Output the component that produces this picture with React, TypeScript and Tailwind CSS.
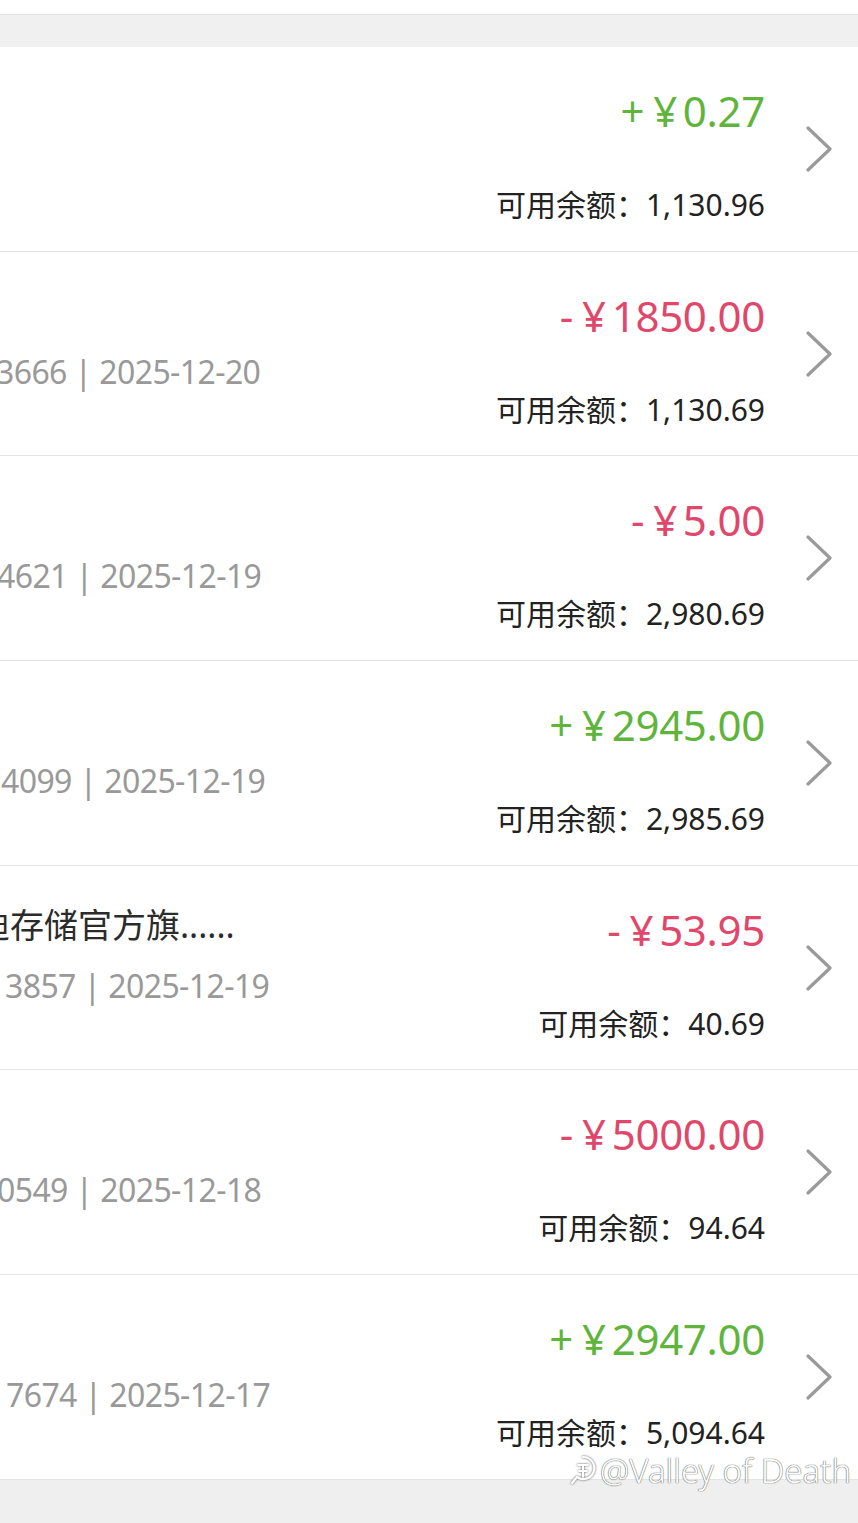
import React from 'react';

type Row = {
  title?: string;
  titleOffset?: string;
  sub?: string;
  subOffset?: string;
  sign: '+' | '-';
  amount: string;
  balance: string;
};

const rows: Row[] = [
  { sign: '+', amount: '0.27', balance: '1,130.96' },
  { sub: '3666 | 2025-12-20', subOffset: 'ml-[-4px]', sign: '-', amount: '1850.00', balance: '1,130.69' },
  { sub: '4621 | 2025-12-19', subOffset: 'ml-[-3px]', sign: '-', amount: '5.00', balance: '2,980.69' },
  { sub: '4099 | 2025-12-19', subOffset: 'ml-[1px]', sign: '+', amount: '2945.00', balance: '2,985.69' },
  {
    title: '闪迪存储官方旗......',
    titleOffset: 'ml-[-58px]',
    sub: '3857 | 2025-12-19',
    subOffset: 'ml-[5px]',
    sign: '-',
    amount: '53.95',
    balance: '40.69',
  },
  { sub: '0549 | 2025-12-18', subOffset: 'ml-[-3px]', sign: '-', amount: '5000.00', balance: '94.64' },
  { sub: '7674 | 2025-12-17', subOffset: 'ml-[6px]', sign: '+', amount: '2947.00', balance: '5,094.64' },
];

const Chevron: React.FC = () => (
  <svg className="self-center ml-[40px] mr-[25px] shrink-0" width="28" height="46" viewBox="0 0 28 46">
    <polyline points="3,2 25,23 3,44" fill="none" stroke="#9a9a9a" strokeWidth="3.2" strokeLinecap="round" strokeLinejoin="round" />
  </svg>
);

const TxRow: React.FC<{ row: Row }> = ({ row }) => {
  const color = row.sign === '+' ? 'text-[#5fb53c]' : 'text-[#e0476a]';
  return (
    <div className="h-[204.7px] flex bg-white border-b border-[#e4e4e4]">
      <div className="flex-1 min-w-0 overflow-hidden pt-[37px] whitespace-nowrap">
        <div className={`h-[44px] text-[34px] leading-[44px] text-[#2b2b2b] ${row.titleOffset ?? ''}`}>
          {row.title ?? ''}
        </div>
        <div className={`mt-[17px] h-[44px] text-[32px] leading-[44px] tracking-[-0.6px] text-[#999999] ${row.subOffset ?? ''}`}>
          {row.sub ?? ''}
        </div>
      </div>
      <div className="flex flex-col items-end pt-[36px] whitespace-nowrap">
        <div className={`flex h-[56px] text-[42px] leading-[56px] tracking-[-0.3px] ${color}`}>
          <span className="mr-[9px]">{row.sign}</span>
          <span className="mr-[6px]">¥</span>
          <span>{row.amount}</span>
        </div>
        <div className="mt-[46px] h-[40px] text-[30px] leading-[40px] text-[#222222]">
          可用余额：{row.balance}
        </div>
      </div>
      <Chevron />
    </div>
  );
};

const App: React.FC = () => {
  return (
    <div className="relative w-[858px] h-[1523px] overflow-hidden bg-[#efefef] font-['Noto_Sans','Noto_Sans_CJK_SC',sans-serif]">
      <div className="h-[15px] bg-white border-b border-[#e2e2e2]" />
      <div className="h-[32px] bg-[#f0f0f0]" />
      <div className="flex flex-col">
        {rows.map((r, i) => (
          <TxRow key={i} row={r} />
        ))}
      </div>

      {/* watermark */}
      <div className="absolute left-[568px] top-[1449px] flex items-center gap-[2px] whitespace-nowrap text-white text-[33px] leading-[44px] font-light [text-shadow:0_0_1px_#555,0_0_1px_#555]">
        <svg width="30" height="36" viewBox="0 0 30 36" className="shrink-0 [filter:drop-shadow(0_0_1px_#555)]">
          <path d="M15 4a11 11 0 1 1-6 20l-5 6" fill="none" stroke="#fff" strokeWidth="2.2" strokeLinecap="round" />
          <path d="M10 12h10M15 12v12M11 18h8" fill="none" stroke="#fff" strokeWidth="2" strokeLinecap="round" />
        </svg>
        <span>@Valley of Death</span>
      </div>
    </div>
  );
};

export default App;
